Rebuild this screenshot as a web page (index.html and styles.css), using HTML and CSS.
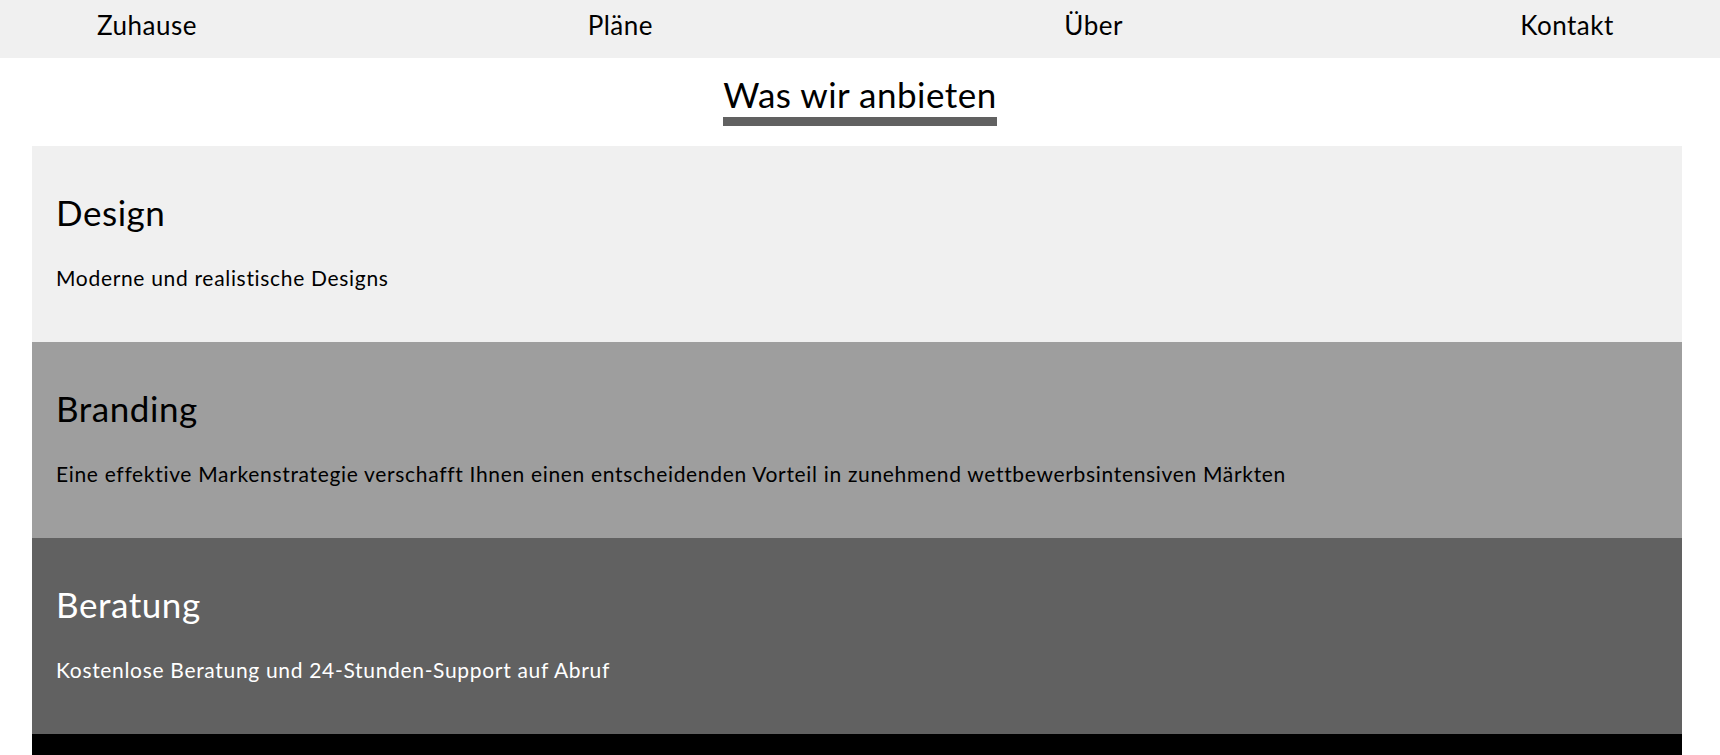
FILE: index.html
```html
<!DOCTYPE html>
<html lang="de">
<head>
<meta charset="utf-8">
<title>Was wir anbieten</title>
<link rel="stylesheet" href="styles.css">
</head>
<body>
<nav class="topnav">
  <ul class="nav-list">
    <li class="nav-item"><a href="#">Zuhause</a></li>
    <li class="nav-item"><a href="#">Pläne</a></li>
    <li class="nav-item"><a href="#">Über</a></li>
    <li class="nav-item"><a href="#">Kontakt</a></li>
  </ul>
</nav>
<main class="services">
  <div class="title-wrap"><h2 class="section-title">Was wir anbieten</h2></div>
  <div class="cards">
    <section class="card card-light">
      <h3 class="card-title">Design</h3>
      <p class="card-text">Moderne und realistische Designs</p>
    </section>
    <section class="card card-mid">
      <h3 class="card-title">Branding</h3>
      <p class="card-text">Eine effektive Markenstrategie verschafft Ihnen einen entscheidenden Vorteil in zunehmend wettbewerbsintensiven Märkten</p>
    </section>
    <section class="card card-dark">
      <h3 class="card-title">Beratung</h3>
      <p class="card-text">Kostenlose Beratung und 24-Stunden-Support auf Abruf</p>
    </section>
    <div class="card-footer"></div>
  </div>
</main>
</body>
</html>
```
FILE: styles.css
```css
* { box-sizing: border-box; }
html, body { margin: 0; padding: 0; }
body {
  font-family: Lato, "Liberation Sans", sans-serif;
  font-variant-ligatures: none;
  color: #000;
  background: #fff;
}
.topnav {
  background: #f0f0f0;
  height: 58px;
}
.nav-list {
  list-style: none;
  margin: 0;
  padding: 10px 53px 0 47px;
  display: flex;
  justify-content: space-between;
}
.nav-item {
  width: 200px;
  text-align: center;
  font-size: 26px;
  line-height: 31px;
  letter-spacing: 0.5px;
}
.nav-item a {
  color: #000;
  text-decoration: none;
}
.title-wrap {
  text-align: center;
  padding-top: 15px;
}
.section-title {
  display: inline-block;
  margin: 0;
  font-size: 35px;
  font-weight: 400;
  line-height: 42px;
  letter-spacing: 0.5px;
  padding-bottom: 2px;
  border-bottom: 9px solid #616161;
}
.cards {
  margin: 20px 38px 0 32px;
}
.card {
  height: 196px;
  padding: 45px 24px 0;
}
.card-light { background: #f0f0f0; }
.card-mid { background: #9e9e9e; }
.card-dark { background: #616161; color: #fff; }
.card-title {
  margin: 0;
  font-size: 35px;
  font-weight: 400;
  line-height: 42px;
  letter-spacing: 0.55px;
}
.card-text {
  margin: 32px 0 0;
  font-size: 21px;
  line-height: 25px;
  letter-spacing: 0.68px;
}
.card-footer {
  background: #000;
  height: 40px;
}
```
